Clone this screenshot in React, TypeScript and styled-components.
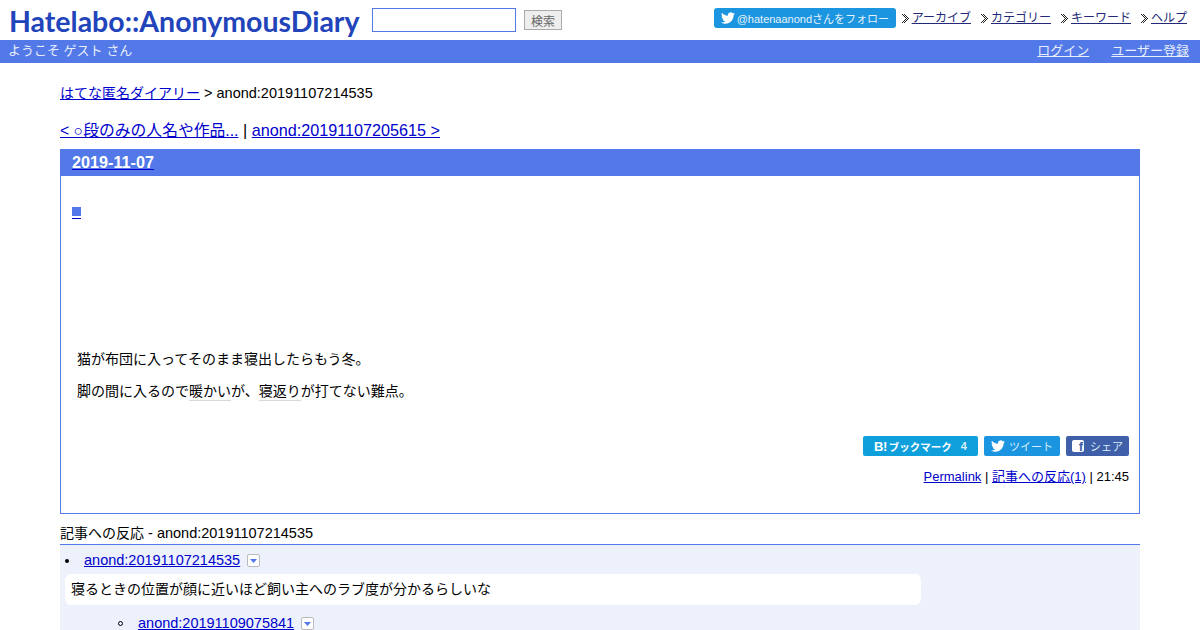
import React from 'react';
import styled, { createGlobalStyle } from 'styled-components';

const GlobalStyle = createGlobalStyle`
  html, body {
    margin: 0;
    padding: 0;
    height: 630px;
    overflow: hidden;
    background: #fff;
    color: #000;
    font-family: 'Liberation Sans', 'Noto Sans CJK JP', sans-serif;
  }
  a {
    color: #0000cc;
  }
`;

const TwitterIcon = ({ size }: { size: number }) => (
  <svg width={size} height={size} viewBox="0 0 24 24" fill="#fff">
    <path d="M23.95 4.57a10 10 0 0 1-2.82.77 4.96 4.96 0 0 0 2.16-2.72 9.9 9.9 0 0 1-3.13 1.19 4.92 4.92 0 0 0-8.38 4.48C7.69 8.1 4.07 6.13 1.64 3.16a4.82 4.82 0 0 0-.66 2.48c0 1.71.87 3.21 2.19 4.1a4.9 4.9 0 0 1-2.23-.62v.06a4.92 4.92 0 0 0 3.95 4.83 5 5 0 0 1-2.21.08 4.94 4.94 0 0 0 4.6 3.42A9.87 9.87 0 0 1 0 19.54a14 14 0 0 0 7.56 2.21c9.05 0 14-7.5 14-13.98 0-.21 0-.42-.02-.63a9.94 9.94 0 0 0 2.46-2.55z" />
  </svg>
);

// dithered double chevron, two one-pixel diagonals side by side
const ARROW_ROWS = [0, 1, 2, 3, 4, 3, 2, 1, 0];

const Arrow = () => (
  <svg width="7" height="9" viewBox="0 0 7 9" fill="#222" shapeRendering="crispEdges">
    {ARROW_ROWS.map((x, y) => (
      <React.Fragment key={y}>
        <rect x={x} y={y} width="1" height="1" />
        <rect x={x + 2} y={y} width="1" height="1" />
      </React.Fragment>
    ))}
  </svg>
);

const Caret = () => (
  <CaretBox>
    <svg width="7" height="4" viewBox="0 0 7 4" fill="#5279e7">
      <path d="M0 0h7L3.5 4z" />
    </svg>
  </CaretBox>
);

const NAV_ITEMS = ['アーカイブ', 'カテゴリー', 'キーワード', 'ヘルプ'];

export default function App() {
  return (
    <>
      <GlobalStyle />
      <Header>
        <Logo>Hatelabo::AnonymousDiary</Logo>
        <SearchInput />
        <SearchButton>検索</SearchButton>
        <HeaderRight>
          <FollowButton>
            <TwitterIcon size={14} />
            <span>@hatenaanondさんをフォロー</span>
          </FollowButton>
          <Nav>
            {NAV_ITEMS.map((item) => (
              <NavItem key={item}>
                <Arrow />
                <a href="#">{item}</a>
              </NavItem>
            ))}
          </Nav>
        </HeaderRight>
      </Header>
      <UserBar>
        <span>ようこそ ゲスト さん</span>
        <UserLinks>
          <a href="#">ログイン</a>
          <a href="#">ユーザー登録</a>
        </UserLinks>
      </UserBar>
      <Main>
        <Breadcrumb>
          <JaLink href="#">はてな匿名ダイアリー</JaLink> &gt; anond:20191107214535
        </Breadcrumb>
        <Pager>
          <PrevLink href="#">&lt; ○段のみの人名や作品...</PrevLink> | <a href="#">anond:20191107205615 &gt;</a>
        </Pager>
        <Day>
          <DayTitle>
            <a href="#">2019-11-07</a>
          </DayTitle>
          <DayBody>
            <SquareLink href="#">
              <i />
            </SquareLink>
            <Article>
              <p>猫が布団に入ってそのまま寝出したらもう冬。</p>
              <p>
                脚の間に入るので<Keyword>暖かい</Keyword>が、<Keyword>寝返り</Keyword>が打てない難点。
              </p>
            </Article>
            <ShareRow>
              <ShareButton $bg="#0fa0dc" $w={115}>
                <HatenaMark>B!</HatenaMark>
                <HatenaLabel>ブックマーク</HatenaLabel>
                <HatenaCount>4</HatenaCount>
              </ShareButton>
              <ShareButton $bg="#1b95e0" $w={76}>
                <TwitterIcon size={14} />
                <span>ツイート</span>
              </ShareButton>
              <ShareButton $bg="#3f5fa8" $w={63}>
                <FacebookMark>f</FacebookMark>
                <span>シェア</span>
              </ShareButton>
            </ShareRow>
            <Meta>
              <a href="#">Permalink</a> | <a href="#">記事への反応(1)</a> | 21:45
            </Meta>
          </DayBody>
        </Day>
        <RefsTitle>
          <JaText>記事への反応</JaText> - anond:20191107214535
        </RefsTitle>
        <Refs>
          <RefRow>
            <Dot />
            <a href="#">anond:20191107214535</a>
            <Caret />
          </RefRow>
          <RefBubble>寝るときの位置が顔に近いほど飼い主へのラブ度が分かるらしいな</RefBubble>
          <NestedRow>
            <Ring />
            <a href="#">anond:20191109075841</a>
            <Caret />
          </NestedRow>
        </Refs>
      </Main>
    </>
  );
}

const Header = styled.header`
  height: 40px;
  display: flex;
  align-items: flex-start;
  padding: 0 13px 0 9px;
  box-sizing: border-box;
`;

const Logo = styled.div`
  width: 350px;
  flex: none;
  margin-top: 4px;
  color: #2244bb;
  font-family: 'Lato', sans-serif;
  font-size: 28.5px;
  font-weight: 700;
  line-height: 34px;
  white-space: nowrap;
`;

const SearchInput = styled.input`
  width: 144px;
  height: 24px;
  margin: 8px 0 0 13px;
  box-sizing: border-box;
  border: 1px solid #5279e7;
  background: #fff;
  padding: 0;
`;

const SearchButton = styled.button`
  width: 38px;
  height: 20px;
  margin: 10px 0 0 8px;
  padding: 0;
  box-sizing: border-box;
  border: 1px solid #aaa;
  background: #eee;
  color: #666;
  font-size: 12px;
  font-family: inherit;
`;

const HeaderRight = styled.div`
  margin-left: auto;
  display: flex;
  align-items: center;
  height: 20px;
  margin-top: 8px;
`;

const FollowButton = styled.div`
  width: 182px;
  height: 20px;
  display: flex;
  align-items: center;
  gap: 2px;
  padding-left: 7px;
  box-sizing: border-box;
  border-radius: 3px;
  background: #1b95e0;
  color: #e6f2fb;
  font-size: 11px;
  white-space: nowrap;
`;

const Nav = styled.nav`
  display: flex;
  gap: 10px;
  margin-left: 6px;
`;

const NavItem = styled.div`
  display: flex;
  align-items: center;
  gap: 3px;
  font-size: 12px;
  line-height: 16px;
  a {
    color: #222a77;
  }
`;

const UserBar = styled.div`
  height: 23px;
  display: flex;
  align-items: center;
  justify-content: space-between;
  padding: 0 11px 5px 8px;
  box-sizing: border-box;
  background: #5279e7;
  color: #e8eefc;
  font-size: 13px;
  a {
    color: #e8eefc;
  }
`;

const UserLinks = styled.div`
  display: flex;
  gap: 22px;
`;

const Main = styled.main`
  margin: 0 60px;
`;

const Breadcrumb = styled.div`
  margin-top: 21px;
  font-size: 14.5px;
  line-height: 18px;
`;

const JaLink = styled.a`
  font-size: 14px;
`;

const JaText = styled.span`
  font-size: 14px;
`;

const Pager = styled.div`
  margin-top: 19px;
  font-size: 16.2px;
  line-height: 19px;
`;

const PrevLink = styled.a`
  font-size: 15.8px;
`;

const Day = styled.section`
  margin-top: 9px;
  height: 365px;
  box-sizing: border-box;
  border: 1px solid #5279e7;
`;

const DayTitle = styled.h2`
  margin: 0;
  height: 26px;
  padding-left: 11px;
  background: #5279e7;
  font-size: 16.2px;
  line-height: 24px;
  a {
    color: #fff;
    text-decoration-color: #0000cc;
  }
`;

const DayBody = styled.div`
  padding: 0 10px 0 11px;
`;

const SquareLink = styled.a`
  display: block;
  width: 9px;
  margin-top: 31px;
  padding-bottom: 2px;
  border-bottom: 1px solid #0000cc;
  i {
    display: block;
    width: 9px;
    height: 9px;
    background: #5279e7;
  }
`;

const Article = styled.div`
  margin: 130px 0 0 5px;
  font-size: 14px;
  line-height: 20px;
  p {
    margin: 0 0 12px;
  }
`;

const Keyword = styled.span`
  display: inline-block;
  line-height: 18px;
  border-bottom: 1px solid #d8d8d8;
`;

const ShareRow = styled.div`
  display: flex;
  justify-content: flex-end;
  gap: 6px;
  margin-top: 35px;
`;

const ShareButton = styled.div<{ $bg: string; $w: number }>`
  width: ${(p) => p.$w}px;
  height: 20px;
  display: flex;
  align-items: center;
  justify-content: center;
  gap: 4px;
  border-radius: 2px;
  background: ${(p) => p.$bg};
  color: #d9eefa;
  font-size: 11px;
`;

const HatenaMark = styled.b`
  color: #fff;
  font-size: 13px;
  letter-spacing: -0.5px;
`;

const HatenaLabel = styled.b`
  color: #fff;
  font-size: 10.5px;
  margin-left: -2px;
  white-space: nowrap;
`;

const HatenaCount = styled.b`
  margin-left: 5px;
  font-size: 11px;
`;

const FacebookMark = styled.span`
  width: 12px;
  height: 12px;
  margin-right: 2px;
  border-radius: 2px;
  background: #fff;
  color: #3f5fa8;
  font-weight: bold;
  font-size: 13px;
  line-height: 14px;
  text-align: right;
  padding-right: 1px;
  box-sizing: border-box;
`;

const Meta = styled.div`
  margin-top: 12px;
  text-align: right;
  font-size: 13px;
  line-height: 18px;
`;

const RefsTitle = styled.div`
  margin-top: 10px;
  height: 20px;
  border-bottom: 1px solid #5279e7;
  font-size: 14.5px;
  line-height: 19px;
`;

const Refs = styled.div`
  background: #ecf1fc;
  height: 100px;
  padding: 6px 5px 0;
`;

const RefRow = styled.div`
  display: flex;
  align-items: center;
  font-size: 14.5px;
  line-height: 19px;
`;

const Dot = styled.span`
  width: 4px;
  height: 4px;
  margin: 0 15px 0 0;
  border-radius: 50%;
  background: #000;
`;

const Ring = styled.span`
  width: 5px;
  height: 5px;
  margin-right: 15px;
  box-sizing: border-box;
  border-radius: 50%;
  border: 1px solid #000;
`;

const NestedRow = styled(RefRow)`
  margin: 9px 0 0 53px;
`;

const CaretBox = styled.span`
  width: 13px;
  height: 13px;
  margin-left: 7px;
  display: inline-flex;
  align-items: center;
  justify-content: center;
  box-sizing: border-box;
  border: 1px solid #bbb;
  border-radius: 2px;
  background: #fff;
`;

const RefBubble = styled.div`
  width: 856px;
  height: 31px;
  margin-top: 4px;
  padding-left: 6px;
  box-sizing: border-box;
  border-radius: 6px;
  background: #fff;
  font-size: 14px;
  line-height: 31px;
`;
